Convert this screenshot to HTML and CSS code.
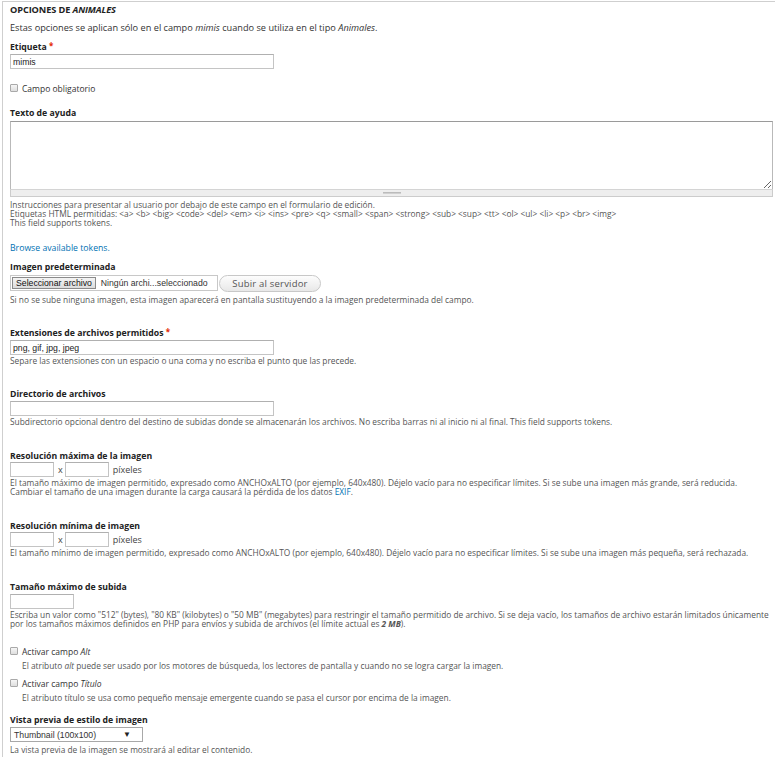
FILE: index.html
```html
<!DOCTYPE html>
<html lang="es">
<head>
<meta charset="utf-8">
<title>Opciones de Animales</title>
<link rel="stylesheet" href="styles.css">
</head>
<body>
<div class="fieldset">
  <h2 class="legend">Opciones de <em>Animales</em></h2>
  <p class="intro">Estas opciones se aplican sólo en el campo <em>mimis</em> cuando se utiliza en el tipo <em>Animales</em>.</p>

  <div class="item item-label-first">
    <label class="label">Etiqueta <span class="req">*</span></label>
    <input class="text wide" type="text" value="mimis">
  </div>

  <div class="check-row check-required">
    <span class="box"></span><span class="check-text">Campo obligatorio</span>
  </div>

  <div class="item item-help-text">
    <label class="label label-tight">Texto de ayuda</label>
    <textarea class="area"></textarea>
    <div class="grippy"><span class="grip"></span></div>
    <div class="help help-area">Instrucciones para presentar al usuario por debajo de este campo en el formulario de edición.<br>Etiquetas HTML permitidas: &lt;a&gt; &lt;b&gt; &lt;big&gt; &lt;code&gt; &lt;del&gt; &lt;em&gt; &lt;i&gt; &lt;ins&gt; &lt;pre&gt; &lt;q&gt; &lt;small&gt; &lt;span&gt; &lt;strong&gt; &lt;sub&gt; &lt;sup&gt; &lt;tt&gt; &lt;ol&gt; &lt;ul&gt; &lt;li&gt; &lt;p&gt; &lt;br&gt; &lt;img&gt;<br>This field supports tokens.</div>
  </div>

  <a class="tokens" href="#">Browse available tokens.</a>

  <div class="item item-image">
    <label class="label label-file">Imagen predeterminada</label>
    <div class="file-row">
      <span class="file-box"><span class="file-btn">Seleccionar archivo</span><span class="file-name">Ningún archi...seleccionado</span></span>
      <span class="upload-btn">Subir al servidor</span>
    </div>
    <div class="help help-file">Si no se sube ninguna imagen, esta imagen aparecerá en pantalla sustituyendo a la imagen predeterminada del campo.</div>
  </div>

  <div class="item item-tight">
    <label class="label">Extensiones de archivos permitidos <span class="req">*</span></label>
    <input class="text wide" type="text" value="png, gif, jpg, jpeg">
    <div class="help">Separe las extensiones con un espacio o una coma y no escriba el punto que las precede.</div>
  </div>

  <div class="item item-tight">
    <label class="label">Directorio de archivos</label>
    <input class="text wide" type="text" value="">
    <div class="help">Subdirectorio opcional dentro del destino de subidas donde se almacenarán los archivos. No escriba barras ni al inicio ni al final. This field supports tokens.</div>
  </div>

  <div class="item">
    <label class="label label-res">Resolución máxima de la imagen</label>
    <div class="res-row">
      <input class="text small" type="text" value=""><span class="times">x</span><input class="text small" type="text" value=""><span class="unit">píxeles</span>
    </div>
    <div class="help">El tamaño máximo de imagen permitido, expresado como ANCHOxALTO (por ejemplo, 640x480). Déjelo vacío para no especificar límites. Si se sube una imagen más grande, será reducida.<br>Cambiar el tamaño de una imagen durante la carga causará la pérdida de los datos <a class="link" href="#">EXIF</a>.</div>
  </div>

  <div class="item">
    <label class="label label-res">Resolución mínima de imagen</label>
    <div class="res-row">
      <input class="text small" type="text" value=""><span class="times">x</span><input class="text small" type="text" value=""><span class="unit">píxeles</span>
    </div>
    <div class="help">El tamaño mínimo de imagen permitido, expresado como ANCHOxALTO (por ejemplo, 640x480). Déjelo vacío para no especificar límites. Si se sube una imagen más pequeña, será rechazada.</div>
  </div>

  <div class="item">
    <label class="label">Tamaño máximo de subida</label>
    <input class="text size" type="text" value="">
    <div class="help">Escriba un valor como "512" (bytes), "80 KB" (kilobytes) o "50 MB" (megabytes) para restringir el tamaño permitido de archivo. Si se deja vacío, los tamaños de archivo estarán limitados únicamente<br>por los tamaños máximos definidos en PHP para envíos y subida de archivos (el límite actual es <strong><em>2 MB</em></strong>).</div>
  </div>

  <div class="check-row check-alt">
    <span class="box"></span><span class="check-text">Activar campo <em>Alt</em></span>
  </div>
  <div class="help help-check">El atributo <em>alt</em> puede ser usado por los motores de búsqueda, los lectores de pantalla y cuando no se logra cargar la imagen.</div>

  <div class="check-row check-title">
    <span class="box"></span><span class="check-text">Activar campo <em>Título</em></span>
  </div>
  <div class="help help-check">El atributo título se usa como pequeño mensaje emergente cuando se pasa el cursor por encima de la imagen.</div>

  <div class="item item-preview">
    <label class="label">Vista previa de estilo de imagen</label>
    <div class="select"><span class="select-value">Thumbnail (100x100)</span><span class="select-arrow">▼</span></div>
    <div class="help help-select">La vista previa de la imagen se mostrará al editar el contenido.</div>
  </div>
</div>
</body>
</html>
```

FILE: styles.css
```css
html, body {
  margin: 0;
  padding: 0;
  background: #fff;
}

body {
  font-family: "Open Sans", "DejaVu Sans", sans-serif;
  color: #333;
  font-size: 9px;
}

.fieldset {
  margin: 1px 0 0 2px;
  border-top: 1px solid #cfcfcf;
  border-left: 1px solid #cfcfcf;
  padding: 2px 2px 20px 7px;
  min-height: 740px;
}

.legend {
  margin: 0;
  font-size: 9.2px;
  line-height: 12px;
  font-weight: bold;
  text-transform: uppercase;
  color: #222;
  letter-spacing: -0.1px;
}

.intro {
  margin: 6px 0 0;
  font-size: 9.2px;
  line-height: 12px;
  color: #333;
}

.item {
  margin-top: 24px;
}

.item-tight {
  margin-top: 23px;
}

.item-label-first {
  margin-top: 7px;
}

.label {
  display: block;
  font-size: 8.7px;
  line-height: 12px;
  font-weight: bold;
  color: #222;
  margin-bottom: 1px;
}

.label-tight {
  margin-bottom: 2px;
}

.label-file {
  margin-bottom: 2px;
}

.label-res {
  margin-bottom: 0;
}

.req {
  color: #e32700;
  font-size: 8px;
  vertical-align: top;
  line-height: 10px;
}

.text {
  display: block;
  box-sizing: border-box;
  height: 15px;
  margin: 0;
  padding: 0 2px;
  border: 1px solid #c4c4c4;
  border-top-color: #b0b0b0;
  border-radius: 0;
  font-family: "Liberation Sans", Arial, sans-serif;
  font-size: 8.7px;
  color: #222;
  background: #fff;
  outline: none;
}

.wide {
  width: 264px;
}

.small {
  width: 44px;
  display: inline-block;
  vertical-align: middle;
}

.size {
  width: 64px;
}

.res-row {
  display: flex;
  align-items: center;
  height: 15px;
}

.times {
  margin: 0 2px 0 4px;
  font-size: 9px;
  color: #444;
}

.unit {
  margin-left: 4px;
  font-size: 9px;
  color: #444;
}

.help {
  margin-top: 1px;
  font-size: 8.35px;
  line-height: 9px;
  color: #555;
}

.help-area {
  margin-top: 3px;
}

.help-file {
  margin-top: 4px;
}

.check-row {
  display: flex;
  align-items: center;
  height: 12px;
  font-size: 8.5px;
  color: #333;
}

.check-required {
  margin-top: 13px;
}

.check-alt {
  margin-top: 17px;
}

.check-title {
  margin-top: 7px;
}

.box {
  box-sizing: border-box;
  width: 8px;
  height: 8px;
  border: 1px solid #a9a9a9;
  border-radius: 1px;
  background: linear-gradient(#f6f6f6, #dedede);
  margin-right: 4px;
}

.help-check {
  margin-top: 4px;
  padding-left: 12px;
}

.item-help-text {
  margin-top: 13px;
}

.area {
  display: block;
  box-sizing: border-box;
  width: 100%;
  height: 68px;
  margin: 0;
  border: 1px solid #b9b9b9;
  border-top-color: #9a9a9a;
  border-bottom: none;
  border-radius: 0;
  padding: 2px;
  font-family: "Open Sans", sans-serif;
  font-size: 9px;
  resize: vertical;
  outline: none;
}

.grippy {
  box-sizing: border-box;
  height: 8px;
  background: #eee;
  border: 1px solid #ccc;
  border-top-color: #d4d4d4;
  display: flex;
  justify-content: center;
  align-items: center;
}

.grip {
  width: 18px;
  height: 2px;
  border-top: 1px solid #bbb;
  border-bottom: 1px solid #d0d0d0;
  box-sizing: border-box;
}

.tokens {
  display: block;
  margin-top: 15px;
  font-size: 8.7px;
  line-height: 12px;
  color: #0071b3;
  text-decoration: none;
}

.link {
  color: #0071b3;
  text-decoration: none;
}

.item-image {
  margin-top: 7px;
}

.file-row {
  display: flex;
  align-items: center;
  height: 16px;
}

.file-box {
  box-sizing: border-box;
  display: flex;
  align-items: center;
  height: 16px;
  width: 208px;
  border: 1px solid #c8c8c8;
  padding-left: 1px;
  font-family: "Liberation Sans", Arial, sans-serif;
  font-size: 8.7px;
  color: #222;
}

.file-btn {
  box-sizing: border-box;
  height: 12px;
  line-height: 10px;
  padding: 0 3px;
  border: 1px solid #8a8a8a;
  background: linear-gradient(#f4f4f4, #dcdcdc);
  color: #111;
}

.file-name {
  margin-left: 5px;
  color: #333;
}

.upload-btn {
  box-sizing: border-box;
  height: 17px;
  line-height: 15px;
  margin-left: 1px;
  width: 102px;
  text-align: center;
  border: 1px solid #c8c8c8;
  border-radius: 9px;
  background: linear-gradient(#fdfdfd, #e8e8e8);
  font-size: 9.5px;
  color: #555;
  letter-spacing: 0.2px;
}

.item-preview {
  margin-top: 12px;
}

.select {
  box-sizing: border-box;
  display: flex;
  align-items: center;
  width: 133px;
  height: 15px;
  border: 1px solid #a8a8a8;
  padding-left: 3px;
  font-family: "Liberation Sans", Arial, sans-serif;
  font-size: 8.7px;
  color: #333;
  background: #fff;
}

.select-value {
  flex: 1;
}

.select-arrow {
  font-size: 8px;
  color: #222;
  margin-right: 11px;
}

.help-select {
  margin-top: 3px;
}
```
